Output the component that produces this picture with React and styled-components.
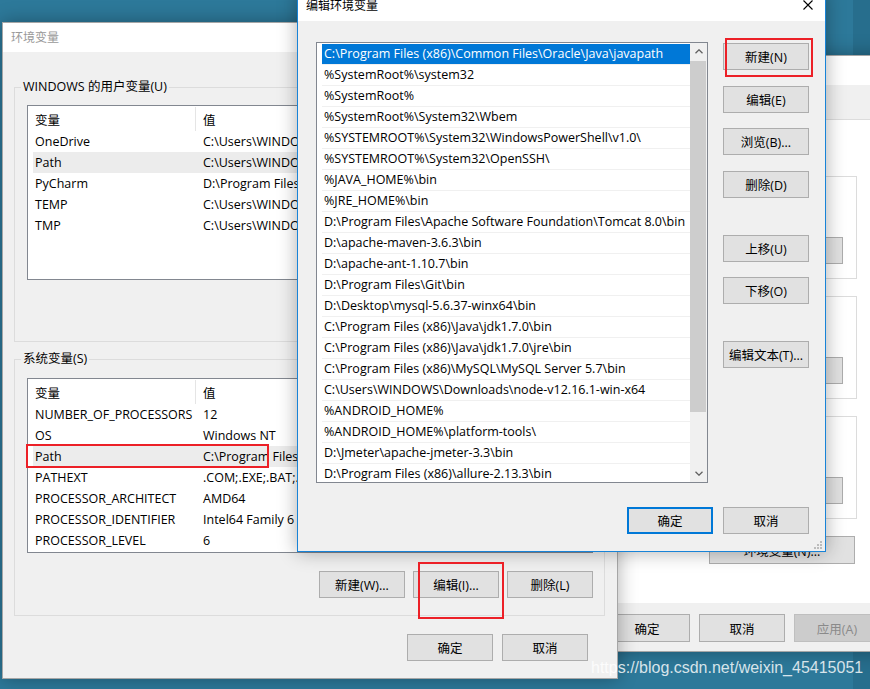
import React from 'react';
import styled, { createGlobalStyle } from 'styled-components';

const FONT = `"Open Sans", "Noto Sans CJK SC", sans-serif`;
const SIZE = '12.5px';

const GlobalStyle = createGlobalStyle`
  html, body {
    margin: 0;
    padding: 0;
  }
  body {
    width: 870px;
    height: 689px;
    overflow: hidden;
    font-family: ${FONT};
    font-size: ${SIZE};
    color: #000;
  }
`;

const userVars = [
  ['OneDrive', 'C:\\Users\\WINDOWS\\OneDrive'],
  ['Path', 'C:\\Users\\WINDOWS\\AppData\\Local\\Microsoft\\WindowsApps;'],
  ['PyCharm', 'D:\\Program Files\\JetBrains\\PyCharm 2020.1\\bin;'],
  ['TEMP', 'C:\\Users\\WINDOWS\\AppData\\Local\\Temp'],
  ['TMP', 'C:\\Users\\WINDOWS\\AppData\\Local\\Temp'],
];

const sysVars = [
  ['NUMBER_OF_PROCESSORS', '12'],
  ['OS', 'Windows NT'],
  ['Path', 'C:\\Program Files (x86)\\Common Files\\Oracle\\Java\\javapath;'],
  ['PATHEXT', '.COM;.EXE;.BAT;.CMD;.VBS;.VBE;.JS;.JSE;.WSF;.WSH;.MSC'],
  ['PROCESSOR_ARCHITECT', 'AMD64'],
  ['PROCESSOR_IDENTIFIER', 'Intel64 Family 6 Model 158 Stepping 10'],
  ['PROCESSOR_LEVEL', '6'],
];

const paths = [
  'C:\\Program Files (x86)\\Common Files\\Oracle\\Java\\javapath',
  '%SystemRoot%\\system32',
  '%SystemRoot%',
  '%SystemRoot%\\System32\\Wbem',
  '%SYSTEMROOT%\\System32\\WindowsPowerShell\\v1.0\\',
  '%SYSTEMROOT%\\System32\\OpenSSH\\',
  '%JAVA_HOME%\\bin',
  '%JRE_HOME%\\bin',
  'D:\\Program Files\\Apache Software Foundation\\Tomcat 8.0\\bin',
  'D:\\apache-maven-3.6.3\\bin',
  'D:\\apache-ant-1.10.7\\bin',
  'D:\\Program Files\\Git\\bin',
  'D:\\Desktop\\mysql-5.6.37-winx64\\bin',
  'C:\\Program Files (x86)\\Java\\jdk1.7.0\\bin',
  'C:\\Program Files (x86)\\Java\\jdk1.7.0\\jre\\bin',
  'C:\\Program Files (x86)\\MySQL\\MySQL Server 5.7\\bin',
  'C:\\Users\\WINDOWS\\Downloads\\node-v12.16.1-win-x64',
  '%ANDROID_HOME%',
  '%ANDROID_HOME%\\platform-tools\\',
  'D:\\Jmeter\\apache-jmeter-3.3\\bin',
  'D:\\Program Files (x86)\\allure-2.13.3\\bin',
];

// label, space above the button
const sideButtons = [
  ['新建(N)', 1],
  ['编辑(E)', 16],
  ['浏览(B)...', 15],
  ['删除(D)', 16],
  ['上移(U)', 37],
  ['下移(O)', 15],
  ['编辑文本(T)...', 37],
];

function CloseX() {
  return (
    <CloseIcon width="10" height="10" viewBox="0 0 10 10">
      <path d="M0.5 0.5 L9.5 9.5 M9.5 0.5 L0.5 9.5" stroke="#000" strokeWidth="1.1" fill="none" />
    </CloseIcon>
  );
}

function Chevron({ down }) {
  return (
    <svg width="8" height="5" viewBox="0 0 8 5">
      <path
        d={down ? 'M0.5 0.8 L4 4.2 L7.5 0.8' : 'M0.5 4.2 L4 0.8 L7.5 4.2'}
        stroke="#606060"
        strokeWidth="1.3"
        fill="none"
      />
    </svg>
  );
}

function ResizeGrip() {
  const dots = [[6, 0], [3, 3], [6, 3], [0, 6], [3, 6], [6, 6]];
  return (
    <Grip width="8" height="8" viewBox="0 0 8 8">
      {dots.map(([x, y]) => (
        <rect key={`${x}-${y}`} x={x} y={y} width="2" height="2" fill="#bcbcbc" />
      ))}
    </Grip>
  );
}

function VarList({ rows, selected }) {
  return (
    <ListView>
      <ListHead>
        <HeadCell $divider>变量</HeadCell>
        <HeadCell>值</HeadCell>
      </ListHead>
      {rows.map(([name, value]) => (
        <VarRow key={name} $selected={name === selected}>
          <NameCell>{name}</NameCell>
          <ValueCell>{value}</ValueCell>
        </VarRow>
      ))}
    </ListView>
  );
}

export default function App() {
  return (
    <Desktop>
      <GlobalStyle />

      {/* 系统属性 (behind) */}
      <Window $left={480} $top={55} $width={414} $height={597}>
        <TitleBar>
          <TitleText $dim>系统属性</TitleText>
          <CloseX />
        </TitleBar>
        <TabStrip />
        <TabPage>
          <Note>要进行大多数更改，你必须作为管理员登录。</Note>
          <PropGroup $mt={0}>
            <Legend>性能</Legend>
            <GroupText>视觉效果，处理器计划</GroupText>
            <Btn>设置(S)...</Btn>
          </PropGroup>
          <PropGroup $mt={9}>
            <Legend>用户配置文件</Legend>
            <GroupText>与登录帐户相关的桌面设置</GroupText>
            <Btn>设置(E)...</Btn>
          </PropGroup>
          <PropGroup $mt={9}>
            <Legend>启动和故障恢复</Legend>
            <GroupText>系统启动、系统故障</GroupText>
            <Btn>设置(T)...</Btn>
          </PropGroup>
          <EnvRow>
            <Btn $w={146} $h={28}>环境变量(N)...</Btn>
          </EnvRow>
        </TabPage>
        <Footer>
          <Btn $h={28}>确定</Btn>
          <Btn $h={28}>取消</Btn>
          <Btn $h={28} $disabled>应用(A)</Btn>
        </Footer>
      </Window>

      {/* 环境变量 */}
      <Window $left={2} $top={22} $width={616} $height={657}>
        <TitleBar>
          <TitleText $dim>环境变量</TitleText>
        </TitleBar>
        <EnvBody>
          <Group $mt={27} $pt={10} $pb={16}>
            <Legend>WINDOWS 的用户变量(U)</Legend>
            <VarList rows={userVars} selected="Path" />
            <ButtonRow>
              <Btn>新建(N)...</Btn>
              <Btn>编辑(E)...</Btn>
              <Btn>删除(D)</Btn>
            </ButtonRow>
          </Group>
          <Group $mt={9} $pt={11} $pb={17}>
            <Legend>系统变量(S)</Legend>
            <VarList rows={sysVars} selected="Path" />
            <ButtonRow>
              <Btn>新建(W)...</Btn>
              <Btn>编辑(I)...</Btn>
              <Btn>删除(L)</Btn>
            </ButtonRow>
          </Group>
          <DialogButtons>
            <Btn>确定</Btn>
            <Btn>取消</Btn>
          </DialogButtons>
        </EnvBody>
      </Window>

      {/* 编辑环境变量 (front) */}
      <Window $left={297} $top={-9} $width={529} $height={561} $active>
        <TitleBar $lift>
          <TitleText>编辑环境变量</TitleText>
          <CloseX />
        </TitleBar>
        <EditBody>
          <PathList>
            <PathItems>
              {paths.map((p, i) => (
                <PathItem key={p} $selected={i === 0}>{p}</PathItem>
              ))}
            </PathItems>
            <ScrollBar>
              <ScrollArrow><Chevron /></ScrollArrow>
              <Thumb />
              <ScrollArrow $bottom><Chevron down /></ScrollArrow>
            </ScrollBar>
          </PathList>
          <SideButtons>
            {sideButtons.map(([label, gap]) => (
              <Btn key={label} $mt={gap}>{label}</Btn>
            ))}
          </SideButtons>
          <EditFooter>
            <Btn $primary>确定</Btn>
            <Btn>取消</Btn>
          </EditFooter>
        </EditBody>
        <ResizeGrip />
      </Window>

      <Mark $x={26} $y={444} $w={243} $h={24} />
      <Mark $x={418} $y={562} $w={86} $h={57} />
      <Mark $x={725} $y={38} $w={88} $h={39} />

      <Watermark>https://blog.csdn.net/weixin_45415051</Watermark>
    </Desktop>
  );
}

const Desktop = styled.div`
  position: relative;
  width: 870px;
  height: 689px;
  overflow: hidden;
  background: linear-gradient(90deg, #2d799a 0, #2d799a 853px, #276e8d 853px);
`;

const Window = styled.div`
  position: absolute;
  left: ${(p) => p.$left}px;
  top: ${(p) => p.$top}px;
  width: ${(p) => p.$width}px;
  height: ${(p) => p.$height}px;
  box-sizing: border-box;
  display: flex;
  flex-direction: column;
  background: #f0f0f0;
  border: 1px solid ${(p) => (p.$active ? '#1883d7' : '#a6a6a6')};
  box-shadow: 0 0 18px rgba(0, 0, 0, 0.32);
`;

const TitleBar = styled.div`
  flex: none;
  height: 29px;
  display: flex;
  align-items: center;
  justify-content: space-between;
  padding: 0 12px ${(p) => (p.$lift ? 4 : 2)}px 8px;
  box-sizing: border-box;
  background: #fff;
`;

const TitleText = styled.span`
  color: ${(p) => (p.$dim ? '#999999' : '#000')};
  font-size: 12px;
`;

const CloseIcon = styled.svg`
  display: block;
  flex: none;
`;

const Btn = styled.button`
  box-sizing: border-box;
  flex: none;
  width: ${(p) => p.$w || 86}px;
  height: ${(p) => p.$h || 27}px;
  margin: ${(p) => p.$mt || 0}px 0 0;
  padding: 0;
  background: ${(p) => (p.$disabled ? '#cccccc' : '#e1e1e1')};
  border: ${(p) => (p.$primary ? '2px solid #0078d7' : `1px solid ${p.$disabled ? '#bfbfbf' : '#adadad'}`)};
  color: ${(p) => (p.$disabled ? '#8a8a8a' : '#000')};
  font: ${SIZE} ${FONT};
  white-space: nowrap;
`;

/* 环境变量 window */

const EnvBody = styled.div`
  flex: 1;
  display: flex;
  flex-direction: column;
  padding: 0 12px 0 11px;
`;

const Group = styled.fieldset`
  margin: ${(p) => p.$mt}px 0 0;
  padding: ${(p) => p.$pt}px 11px ${(p) => p.$pb}px 12px;
  min-width: 0;
  border: 1px solid #dcdcdc;
`;

const Legend = styled.legend`
  margin-left: -6px;
  padding: 0 2px;
  line-height: 16px;
  font-size: ${SIZE};
  color: #000;
`;

const ListView = styled.div`
  height: 175px;
  box-sizing: border-box;
  border: 1px solid #828790;
  background: #fff;
  overflow: hidden;
`;

const ListHead = styled.div`
  display: grid;
  grid-template-columns: 168px 1fr;
  height: 25px;
`;

const HeadCell = styled.div`
  display: flex;
  align-items: center;
  padding-left: 7px;
  margin-top: 1px;
  border-right: ${(p) => (p.$divider ? '1px solid #e5e5e5' : 'none')};
`;

const VarRow = styled.div`
  display: grid;
  grid-template-columns: 163px 1fr;
  height: 21px;
  line-height: 21px;
  margin-left: 5px;
  background: ${(p) => (p.$selected ? '#ececec' : 'transparent')};
  white-space: nowrap;
`;

const NameCell = styled.div`
  padding-left: 2px;
  overflow: hidden;
`;

const ValueCell = styled.div`
  padding-left: 7px;
  overflow: hidden;
`;

const ButtonRow = styled.div`
  display: flex;
  justify-content: flex-end;
  gap: 8px;
  margin-top: 18px;
`;

const DialogButtons = styled.div`
  display: flex;
  justify-content: flex-end;
  gap: 9px;
  margin-top: 18px;
  padding-right: 17px;
`;

/* 编辑环境变量 window */

const EditBody = styled.div`
  flex: 1;
  display: grid;
  grid-template-columns: 392px 86px;
  grid-template-rows: 441px auto;
  column-gap: 15px;
  padding: 21px 16px 17px 18px;
`;

const PathList = styled.div`
  display: flex;
  box-sizing: border-box;
  border: 1px solid #828790;
  background: #fff;
  overflow: hidden;
`;

const PathItems = styled.div`
  flex: 1;
  padding: 1px 0 0 5px;
  overflow: hidden;
`;

const PathItem = styled.div`
  height: 21px;
  box-sizing: border-box;
  padding: 0 2px;
  line-height: 20px;
  border-bottom: 1px solid #f0f0f0;
  white-space: nowrap;
  background: ${(p) => (p.$selected ? '#0078d7' : 'transparent')};
  color: ${(p) => (p.$selected ? '#fff' : '#000')};
`;

const ScrollBar = styled.div`
  flex: none;
  width: 17px;
  display: flex;
  flex-direction: column;
  background: #f0f0f0;
`;

const ScrollArrow = styled.div`
  height: 17px;
  display: flex;
  align-items: center;
  justify-content: center;
  margin-top: ${(p) => (p.$bottom ? 'auto' : '0')};
`;

const Thumb = styled.div`
  height: 351px;
  margin: 1px 1px 0 0;
  background: #cdcdcd;
`;

const SideButtons = styled.div`
  display: flex;
  flex-direction: column;
`;

const EditFooter = styled.div`
  grid-column: 1 / 3;
  display: flex;
  justify-content: flex-end;
  gap: 10px;
  margin-top: 24px;
`;

const Grip = styled.svg`
  position: absolute;
  right: 3px;
  bottom: 2px;
`;

/* 系统属性 window */

const TabStrip = styled.div`
  flex: none;
  height: 34px;
  background: #f0f0f0;
`;

const TabPage = styled.div`
  flex: none;
  height: 484px;
  box-sizing: border-box;
  border-top: 1px solid #dcdcdc;
  background: #fff;
  padding: 0 36px 0 14px;
`;

const Note = styled.div`
  height: 48px;
  line-height: 48px;
  padding-left: 8px;
  white-space: nowrap;
`;

const PropGroup = styled.fieldset`
  margin: ${(p) => p.$mt}px 0 0;
  padding: 0 13px 14px;
  min-width: 0;
  display: flex;
  flex-direction: column;
  align-items: flex-end;
  border: 1px solid #dcdcdc;
`;

const GroupText = styled.div`
  align-self: stretch;
  height: 53px;
  padding-top: 6px;
  box-sizing: border-box;
  white-space: nowrap;
`;

const EnvRow = styled.div`
  display: flex;
  justify-content: flex-end;
  margin-top: 17px;
  padding-right: 2px;
`;

const Footer = styled.div`
  flex: 1;
  display: flex;
  justify-content: flex-end;
  align-items: flex-start;
  gap: 9px;
  padding: 11px 13px 0 0;
  background: #f0f0f0;
`;

/* overlays */

const Mark = styled.div`
  position: absolute;
  left: ${(p) => p.$x}px;
  top: ${(p) => p.$y}px;
  width: ${(p) => p.$w}px;
  height: ${(p) => p.$h}px;
  box-sizing: border-box;
  border: 2px solid #ec2027;
  pointer-events: none;
`;

const Watermark = styled.div`
  position: absolute;
  left: 591px;
  top: 659px;
  font: 16px/18px "Liberation Sans", sans-serif;
  color: rgba(255, 255, 255, 0.82);
  white-space: nowrap;
`;
